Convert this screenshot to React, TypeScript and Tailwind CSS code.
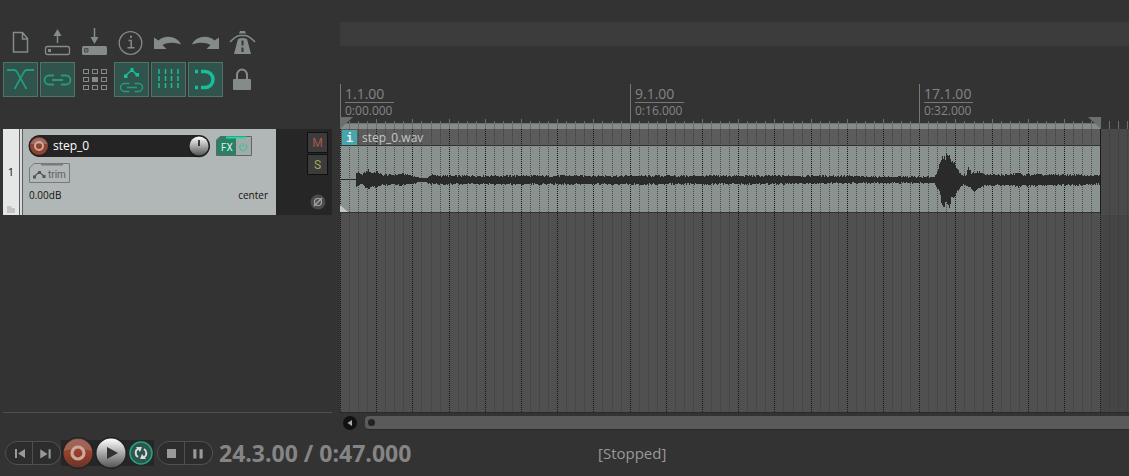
import React from "react";

const BEAT = 9.05;
const LENGTH = 761;

const beats = Array.from({ length: 88 }, (_, i) => ({ x: Math.round(i * BEAT), major: i % 4 === 0 }));

const markers = [
  { x: 0, bar: "1.1.00", time: "0:00.000" },
  { x: 290, bar: "9.1.00", time: "0:16.000" },
  { x: 579, bar: "17.1.00", time: "0:32.000" },
];

// Peak envelope: [x, height above centre, height below centre]
const envelope: [number, number, number][] = [
  [0, 1, 0], [15, 1, 0], [16, 7, 6], [18, 7, 5], [21, 5, 4], [26, 8, 8], [28, 10, 9], [31, 7, 7], [36, 8, 7], [42, 5, 5],
  [54, 5, 4], [60, 6, 5], [68, 5, 4], [76, 3, 3], [79, 2, 2], [86, 2, 2], [91, 5, 4], [96, 4, 4], [300, 4, 4],
  [420, 4, 4], [500, 4, 3], [540, 3, 3], [594, 3, 3], [596, 7, 7], [599, 14, 11], [602, 22, 26], [603, 22, 29], [605, 22, 23],
  [607, 27, 24], [609, 24, 26], [611, 18, 18], [614, 18, 15], [617, 11, 11], [620, 6, 8], [623, 5, 4], [626, 5, 5],
  [628, 13, 7], [631, 7, 8], [633, 7, 12], [636, 8, 9], [640, 8, 7], [644, 5, 6], [652, 5, 5], [670, 5, 5], [678, 7, 7],
  [682, 5, 5], [690, 5, 6], [710, 5, 5], [740, 5, 5], [752, 4, 4], [761, 5, 4],
];

function level(x: number, side: 1 | 2) {
  const n = envelope.findIndex((p) => p[0] > x);
  if (n < 1) return envelope[envelope.length - 1][side];
  const a = envelope[n - 1];
  const b = envelope[n];
  return a[side] + ((b[side] - a[side]) * (x - a[0])) / (b[0] - a[0]);
}

function jitter(x: number, seed: number) {
  const v = Math.sin(x * 12.9898 + seed * 78.233) * 43758.5453;
  return v - Math.floor(v);
}

const wave = Array.from({ length: LENGTH - 1 }, (_, x) => {
  const quiet = x < 16 || (x > 75 && x < 88);
  const gain = (side: 1 | 2) => {
    const l = level(x, side);
    return Math.max(0, Math.round(l + (jitter(x, side) - 0.45) * (quiet ? 0.9 : 1.3 + l * 0.12)));
  };
  const up = Math.max(1, gain(1));
  const down = gain(2);
  return `M${x} ${35 - up}h1v${up + down}h-1z`;
}).join("");

function Grid() {
  return (
    <svg className="pointer-events-none absolute inset-0 h-full w-full" shapeRendering="crispEdges" aria-hidden="true">
      {beats.map((b) => (
        <line key={b.x} x1={b.x + 0.5} x2={b.x + 0.5} y1="0" y2="100%" stroke={b.major ? "#151515" : "#363636"} strokeOpacity={b.major ? 1 : 0.75} strokeDasharray="1 1" />
      ))}
    </svg>
  );
}

const G = "#858b89";
const T = "#18bd9b";
const D = "#249a80";

const tools: { name: string; on?: boolean; icon: React.ReactNode }[] = [
  { name: "New project", icon: <path d="M10.500 6.500h9l5 6v13.500h-14zM19.500 6.500v6.500h5" fill="none" stroke={G} strokeWidth="1.500" /> },
  { name: "Open project", icon: <g><path d="M17.500 17V8" stroke={G} strokeWidth="1.500" /><path d="M17.500 3l4 7h-8z" fill={G} /><rect x="5.500" y="20.500" width="24" height="8" rx="2" fill="none" stroke={G} strokeWidth="1.300" /><path d="M8 23h3v3h-3z" fill={G} /></g> },
  { name: "Save project", icon: <g><path d="M17.500 2v10" stroke={G} strokeWidth="1.500" /><path d="M17.500 18l4-7h-8z" fill={G} /><rect x="5" y="20" width="25" height="9" rx="1.500" fill={G} /><path d="M7.500 22.500h3.500v3.500h-3.500z" fill="#6c7270" stroke="#4c504f" /></g> },
  { name: "Project settings", icon: <g fill="none" stroke={G}><circle cx="16.500" cy="17" r="11.300" strokeWidth="1.300" /><path d="M14.500 14.500h2.700v7M13.500 21.700h7" strokeWidth="1.500" /><path d="M16 10.800h2" strokeWidth="2" /></g> },
  { name: "Undo", icon: <path d="M3 11.500v11.500h12.500l-4-4c5-3 12-3 18.500-.5c-3-8-16-10.500-22.500-4z" fill={G} /> },
  { name: "Redo", icon: <path d="M31 11.500v11.500h-12.500l4-4c-5-3-12-3-18.500-.5c3-8 16-10.500 22.500-4z" fill={G} /> },
  { name: "Metronome", icon: <g><path d="M15 5h5l1 2.500h-7z" fill={G} /><path d="M13 13q4.500-2 9 0l4 15h-17z" fill={G} /><path d="M17.500 14.500v5M17.500 21.500v4.500" stroke="#3c3e3d" strokeWidth="2.200" /><path d="M5 16q5-5.500 9.500-6.500h6q4.500 1 9.500 6.500" fill="none" stroke={G} strokeWidth="1.400" /></g> },
  { name: "Auto crossfade", on: true, icon: <g fill="none" stroke={D} strokeWidth="1.800"><path d="M4 8h7q2 0 3 2l9.500 17" /><path d="M31 8h-7q-2 0-3 2l-9.500 17" /></g> },
  { name: "Item grouping", on: true, icon: <g fill="none" stroke={D} strokeWidth="1.800"><path d="M14 13.500h-5a4.500 4.500 0 0 0 0 9h5M21 13.500h5a4.500 4.500 0 0 1 0 9h-5M12 18h11" /></g> },
  { name: "Ripple editing", icon: <g fill="none" stroke={G}>{[8, 16, 24].map((y) => [6, 15, 24].map((x) => <rect key={x + "-" + y} x={x + 0.5} y={y - 0.5} width="5" height="4" fill={x === 15 && y === 16 ? G : "none"} />))}</g> },
  { name: "Move envelopes with items", on: true, icon: <g fill="none" stroke={T}><path d="M11 14l7-6 5 5" strokeWidth="1.500" /><path d="M10 12.500h3.500v3.500h-3.500zM16.500 6h3v4h-3zM21.500 11h3.500v3.500h-3.500z" fill={T} stroke="none" /><path d="M15.500 21.500h-5a4 4 0 0 0 0 8h5M20.500 21.500h4a4 4 0 0 1 0 8h-4M13 25.500h10" stroke={D} strokeWidth="1.500" /></g> },
  { name: "Grid lines", on: true, icon: <path d="M8 7v20M14.500 7v20M20.500 7v20M27 7v20" stroke={T} strokeWidth="1.500" strokeDasharray="5 2" /> },
  { name: "Snap", on: true, icon: <g fill="none" stroke={T} strokeWidth="3.500"><path d="M13 9.500h4a8 8 0 0 1 0 16H13" /><path d="M7 9.500h3M7 25.500h3" /></g> },
  { name: "Lock", icon: <g><rect x="8" y="17" width="18" height="11" rx="1" fill={G} /><path d="M12 17v-4a5 5.500 0 0 1 10 0v4" fill="none" stroke={G} strokeWidth="2" /></g> },
];

function Toolbar() {
  return (
    <div className="grid w-fit grid-cols-7 gap-x-px pl-[3px]">
      {tools.map((t) => (
        <button key={t.name} type="button" aria-label={t.name} aria-pressed={t.on} className="h-9 w-9">
          <svg viewBox="0 0 36 36" className="h-9 w-9">
            {t.on && <rect x="0.500" y="0.500" width="34" height="34" fill="#30534b" stroke="#50746c" />}
            {t.icon}
          </svg>
        </button>
      ))}
    </div>
  );
}

function TrackPanel() {
  return (
    <section aria-label="Track 1" className="ml-[3px] flex h-[86px] w-[329px] bg-[#262626] text-[#111]">
      <div className="flex w-4 flex-col items-center justify-between bg-[#e5e7e6]">
        <span className="h-2" />
        <span className="text-[11px] leading-4">1</span>
        <svg viewBox="0 0 8 7" className="mb-0.5 h-[7px] w-2" aria-hidden="true"><path d="M0 0h4l1 2h3v5H0z" fill="#c2c5c4" /></svg>
      </div>
      <div className="w-1 border-x border-[#5c5c60] bg-[#d9dcdb]" />
      <div className="flex w-[253px] flex-col bg-[#b1b7b6] pl-1.5 pt-1.5">
        <div className="flex items-center gap-1.5">
          <div className="flex h-[22px] w-[181px] items-center justify-between rounded-full bg-[#242424]">
            <button type="button" aria-label="Record arm" className="h-[22px] w-[22px]">
              <svg viewBox="0 0 22 22" className="overflow-visible"><circle cx="10" cy="12" r="10" fill="#000" fillOpacity="0.300" /><circle cx="10" cy="11" r="10.500" fill="#222" /><circle cx="10" cy="11" r="9" fill="#8d4432" /><path d="M1.500 9a9 9 0 0 1 17 0z" fill="#a06b5e" /><circle cx="10" cy="11" r="4" fill="none" stroke="#cfa89e" strokeWidth="2" /></svg>
            </button>
            <span className="grow pl-0.5 text-xs text-white">step_0</span>
            <button type="button" aria-label="Volume" className="h-[22px] w-[22px]">
              <svg viewBox="0 0 22 22" className="overflow-visible"><circle cx="11" cy="12" r="10.500" fill="#000" fillOpacity="0.300" /><circle cx="11" cy="11" r="10.500" fill="#222" /><circle cx="11" cy="11" r="9.500" fill="url(#metal)" /><path d="M11 5v6" stroke="#111" strokeWidth="1.500" /></svg>
            </button>
          </div>
          <button type="button" aria-label="Track effects" className="h-5 w-9">
            <svg viewBox="0 0 36 20"><path d="M4 0.500h31.500v19H0.500V4z" fill="#a4aaa8" stroke="#626565" /><path d="M4 1h16v18H1V4z" fill="#2a8064" /><path d="M10 1.500h20" stroke="#0fe3a9" strokeWidth="2" /><text x="5" y="15" fontSize="10" fontFamily="Roboto, sans-serif" fill="#d6eee6">FX</text><path d="M25 8.500a3.500 3.500 0 1 0 4.500 0M27.200 7v4" fill="none" stroke="#37c59c" strokeWidth="1.200" /></svg>
          </button>
        </div>
        <button type="button" aria-label="Envelopes" className="mt-1.5 h-5 w-[41px]">
          <svg viewBox="0 0 41 20"><path d="M5 0.500h35.500v19H0.500V5z" fill="#b1b7b6" stroke="#767a79" /><path d="M12 1.500h22" stroke="#777b7a" strokeWidth="2" /><path d="M5 14l5-5 5 4" fill="none" stroke="#555" strokeWidth="1.300" /><path d="M4 12.500h3v3H4zM9 8h3v3H9zM13.500 12h3v3h-3z" fill="#555" /><text x="19" y="15" fontSize="10" fontFamily="Roboto, sans-serif" fill="#5c5f5e">trim</text></svg>
        </button>
        <div className="mt-1 flex justify-between pr-2 text-[10px] leading-4"><span>0.00dB</span><span>center</span></div>
      </div>
      <div className="flex grow flex-col items-end pr-1 pt-[3px]">
        <button type="button" aria-label="Mute" className="h-[21px] w-[21px] border border-[#111] bg-[#3c3c3c] font-[Roboto] text-xs text-[#a9554d]">M</button>
        <button type="button" aria-label="Solo" className="mt-px h-[21px] w-[21px] border border-[#111] bg-[#3c3c3c] font-[Roboto] text-xs text-[#a5a55c]">S</button>
        <button type="button" aria-label="Invert phase" className="mr-0.5 mt-[19px] h-4 w-4">
          <svg viewBox="0 0 16 16"><circle cx="8" cy="8" r="7.500" fill="#4a4a4a" /><circle cx="8" cy="8" r="3.500" fill="none" stroke="#aaa" strokeWidth="1.200" /><path d="M4 12l8-8" stroke="#aaa" strokeWidth="1.200" /></svg>
        </button>
      </div>
    </section>
  );
}

function Ruler() {
  return (
    <div className="relative h-[83px] overflow-hidden text-[#858585]">
      {markers.map((m) => (
        <div key={m.bar} className="absolute top-[38px] flex h-10 flex-col items-start border-l border-[#777] pl-1" style={{ left: m.x }}>
          <span className="mt-0.5 w-[49px] border-b border-[#777] text-sm leading-4">{m.bar}</span>
          <span className="text-xs leading-4">{m.time}</span>
        </div>
      ))}
      <svg className="absolute inset-0 h-full w-full" shapeRendering="crispEdges" aria-hidden="true">
        <rect x="0" y="77" width="761" height="6" fill="#858b89" />
        <rect x="0" y="77" width="761" height="1" fill="#6f7473" />
        {beats.map((b) => <path key={b.x} d={b.major ? `M${b.x + 0.5} 73v10` : `M${b.x + 0.5} 75v8`} stroke="#6c6e6d" />)}
        <path d="M0 71h13l-13 12zM761 71h-13l13 12z" fill="#6c6f6e" shapeRendering="auto" />
      </svg>
    </div>
  );
}

function Clip() {
  return (
    <div className="relative h-[86px] bg-[#4a4a4a]">
      <div className="flex h-[84px] w-[761px] flex-col border-r border-[#222] bg-[#8a9290]">
        <div className="h-[17px] border-b border-[#333] bg-[#5c5c5c]" />
        <div className="grow border-b border-[#333]" />
      </div>
      <div className="h-0.5 w-[761px] bg-[#505050]" />
      <Grid />
      <svg className="absolute left-0 top-4 h-[68px] w-[761px]" shapeRendering="crispEdges" role="img" aria-label="Waveform">
        <path d={wave} fill="#2a2a2a" />
        <path d="M0 60l8 7H0z" fill="#c4c8c7" shapeRendering="auto" />
      </svg>
      <div className="absolute left-0.5 top-px flex h-[15px] items-center gap-[5px] text-xs text-[#c4c8c6]">
        <span className="flex h-[15px] w-[15px] items-center justify-center bg-[#48a5ac] font-['DejaVu_Sans_Mono'] font-bold text-[#d9f1f2]">i</span>
        <span>step_0.wav</span>
      </div>
    </div>
  );
}

function Transport() {
  return (
    <footer className="flex h-[46px] items-start pl-[5px] pt-[5px]">
      <div className="flex h-9 items-center">
        <button type="button" aria-label="Go to start" className="h-6 w-7 rounded-l-full border border-[#505050] bg-[#2d2d2d]"><svg viewBox="0 0 26 22"><path d="M9 7h2v9h-2zM19 7v9l-7-4.500z" fill="#999" /></svg></button>
        <button type="button" aria-label="Go to end" className="h-6 w-7 rounded-r-full border border-l-0 border-[#505050] bg-[#2d2d2d]"><svg viewBox="0 0 26 22"><path d="M7 7v9l7-4.500zM15 7h2v9h-2z" fill="#999" /></svg></button>
        <div className="flex h-[26px] items-center bg-[#262626] px-px">
          <button type="button" aria-label="Record" className="h-8 w-8"><svg viewBox="0 0 32 32"><circle cx="16" cy="16" r="16" fill="#242424" /><circle cx="16" cy="16" r="14.500" fill="url(#rec)" /><path d="M2 14a14.200 14.200 0 0 1 28 0q-14-5-28 0z" fill="#a87468" fillOpacity="0.600" /><circle cx="16" cy="16" r="6" fill="none" stroke="#d0a79c" strokeWidth="3.200" /></svg></button>
          <button type="button" aria-label="Play" className="ml-px h-8 w-8"><svg viewBox="0 0 32 32"><circle cx="16" cy="16" r="16" fill="#222" /><circle cx="16" cy="16" r="14.500" fill="url(#metal)" /><path d="M12 10v12l11-6z" fill="#333" /></svg></button>
          <button type="button" aria-label="Repeat" className="ml-0.5 h-6 w-6"><svg viewBox="0 0 24 24"><circle cx="12" cy="12" r="11" fill="#2f564c" stroke="#1fa587" strokeWidth="1.500" /><path d="M9 16a5 5 0 0 1 0-8.500M15 8a5 5 0 0 1 0 8.500" fill="none" stroke="#d6dedb" strokeWidth="2" /><path d="M7 6h6l-2 5zM17 18h-6l2-5z" fill="#d6dedb" /></svg></button>
        </div>
        <button type="button" aria-label="Stop" className="ml-[3px] h-6 w-7 rounded-l-full border border-[#505050] bg-[#2d2d2d]"><svg viewBox="0 0 26 22"><path d="M9 7h9v9H9z" fill="#999" /></svg></button>
        <button type="button" aria-label="Pause" className="h-6 w-7 rounded-r-full border border-l-0 border-[#505050] bg-[#2d2d2d]"><svg viewBox="0 0 26 22"><path d="M8 7h3v9H8zM14 7h3v9h-3z" fill="#999" /></svg></button>
      </div>
      <output className="ml-1.5 w-[379px] text-[23px] font-bold leading-9 text-[#858585]">24.3.00 / 0:47.000</output>
      <span className="text-[15px] leading-9 text-[#999]">[Stopped]</span>
    </footer>
  );
}

export default function App() {
  return (
    <main className="flex min-h-screen flex-col overflow-hidden bg-[#333] font-['Open_Sans',sans-serif]">
      <svg className="absolute h-0 w-0" aria-hidden="true">
        <defs>
          <linearGradient id="metal" x1="0" y1="0" x2="0" y2="1"><stop offset="0" stopColor="#fff" /><stop offset="0.500" stopColor="#aaa" /><stop offset="1" stopColor="#555" /></linearGradient>
          <linearGradient id="rec" x1="0" y1="0" x2="0" y2="1"><stop offset="0" stopColor="#8a5549" /><stop offset="0.500" stopColor="#984029" /><stop offset="1" stopColor="#67352a" /></linearGradient>
        </defs>
      </svg>
      <div className="flex grow">
        <aside className="flex w-[332px] shrink-0 flex-col">
          <div className="h-[129px] pt-[26px]"><Toolbar /></div>
          <TrackPanel />
          <div className="ml-[3px] grow border-b border-[#505050]" />
          <div className="h-[17px]" />
        </aside>
        <div className="ml-2 flex min-w-0 grow flex-col">
          <div className="mt-[22px] h-6 bg-[#3c3c3c]" />
          <Ruler />
          <Clip />
          <div className="relative flex grow border-b border-[#2b2b2b] bg-[#454545]">
            <div className="w-[761px] bg-[#505050]" />
            <Grid />
          </div>
          <div className="flex h-[17px] items-end gap-2 pl-[3px]">
            <button type="button" aria-label="Scroll left" className="h-[14px] w-[14px]"><svg viewBox="0 0 14 14"><circle cx="7" cy="7" r="7" fill="#111" /><path d="M9 4v6L4.500 7z" fill="#aaa" /></svg></button>
            <div className="flex h-[14px] grow items-center rounded-l border-b border-[#2a2a2a] bg-[#5a5a5a] pl-[3px]"><span className="h-[7px] w-[7px] rounded-full bg-[#222]" /></div>
          </div>
        </div>
      </div>
      <Transport />
    </main>
  );
}
